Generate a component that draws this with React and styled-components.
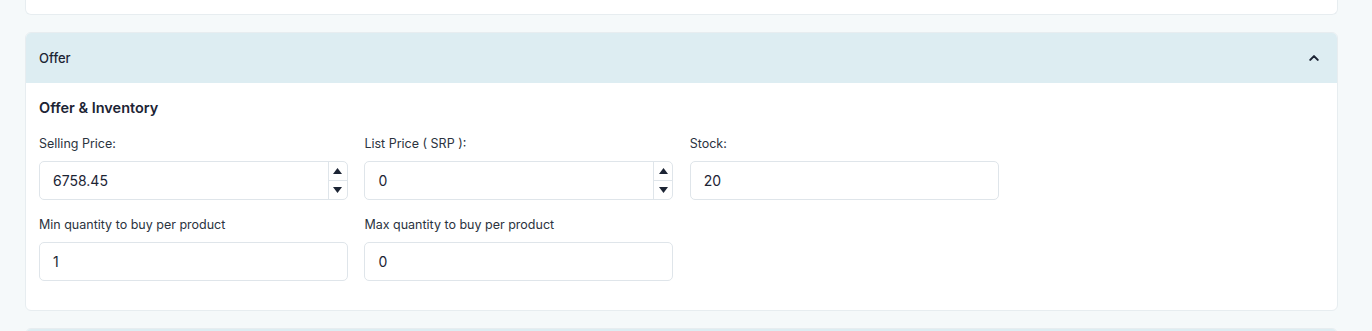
import styled, { createGlobalStyle } from "styled-components";

const GlobalStyle = createGlobalStyle`
  * { box-sizing: border-box; }
  body {
    margin: 0;
    background: #f5f9fa;
    font-family: Inter, "Noto Sans", sans-serif;
    color: #1c2434;
    overflow: hidden;
  }
`;

const Page = styled.div`
  padding: 0 34px 0 25px;
  display: flex;
  flex-direction: column;
  gap: 17px;
`;

const Card = styled.section`
  background: #fff;
  border: 1px solid #e7edf0;
  border-radius: 6px;
`;

const CutCard = styled(Card)`
  height: 15px;
  border-top: none;
  border-radius: 0 0 6px 6px;
`;

const Header = styled.div`
  height: 50px;
  background: #ddedf2;
  display: flex;
  align-items: center;
  justify-content: space-between;
  padding: 0 14px 0 13px;
  font-size: 13px;
  font-weight: 500;
  border-radius: ${(p) => (p.$open ? "5px 5px 0 0" : "5px")};
`;

const Body = styled.div`
  padding: 15px 13px 29px;
`;

const Heading = styled.h3`
  margin: 0 0 18px;
  font-size: 14.5px;
  line-height: 20px;
  font-weight: 600;
`;

const Grid = styled.div`
  display: grid;
  grid-template-columns: repeat(4, 1fr);
  column-gap: 16.5px;
  row-gap: 17px;
`;

const Field = styled.div`
  display: flex;
  flex-direction: column;
  gap: 9px;
`;

const Label = styled.label`
  font-size: 12.5px;
  line-height: 16px;
  color: #2b3340;
`;

const InputBox = styled.div`
  height: 39px;
  display: flex;
  border: 1px solid #dfe5ea;
  border-radius: 5px;
  background: #fff;
  overflow: hidden;
`;

const Input = styled.input`
  all: unset;
  flex: 1;
  min-width: 0;
  padding: 0 13px;
  font-size: 14px;
  color: #1c2434;
`;

const Spinner = styled.div`
  width: 19px;
  display: flex;
  flex-direction: column;
  border-left: 1px solid #dfe5ea;
`;

const SpinBtn = styled.button`
  all: unset;
  flex: 1;
  display: flex;
  align-items: center;
  justify-content: center;
  & + & {
    border-top: 1px solid #dfe5ea;
  }
`;

const Tri = ({ up }) => (
  <svg width="9" height="6" viewBox="0 0 9 6">
    <path d={up ? "M0 6 L4.5 0 L9 6 Z" : "M0 0 L9 0 L4.5 6 Z"} fill="#1c2434" />
  </svg>
);

const Chevron = () => (
  <svg width="18" height="18" viewBox="0 0 24 24" fill="none" stroke="#1c2434" strokeWidth="2.8" strokeLinecap="round" strokeLinejoin="round">
    <path d="M7 14.5l5-5 5 5" />
  </svg>
);

const NumberField = ({ label, value, spin }) => (
  <Field>
    <Label>{label}</Label>
    <InputBox>
      <Input defaultValue={value} />
      {spin && (
        <Spinner>
          <SpinBtn><Tri up /></SpinBtn>
          <SpinBtn><Tri /></SpinBtn>
        </Spinner>
      )}
    </InputBox>
  </Field>
);

export default function App() {
  return (
    <>
      <GlobalStyle />
      <Page>
        <CutCard />
        <Card>
          <Header $open>
            <span>Offer</span>
            <Chevron />
          </Header>
          <Body>
            <Heading>Offer &amp; Inventory</Heading>
            <Grid>
              <NumberField label="Selling Price:" value="6758.45" spin />
              <NumberField label="List Price ( SRP ):" value="0" spin />
              <NumberField label="Stock:" value="20" />
              <div />
              <NumberField label="Min quantity to buy per product" value="1" />
              <NumberField label="Max quantity to buy per product" value="0" />
            </Grid>
          </Body>
        </Card>
        <Card>
          <Header />
        </Card>
      </Page>
    </>
  );
}
